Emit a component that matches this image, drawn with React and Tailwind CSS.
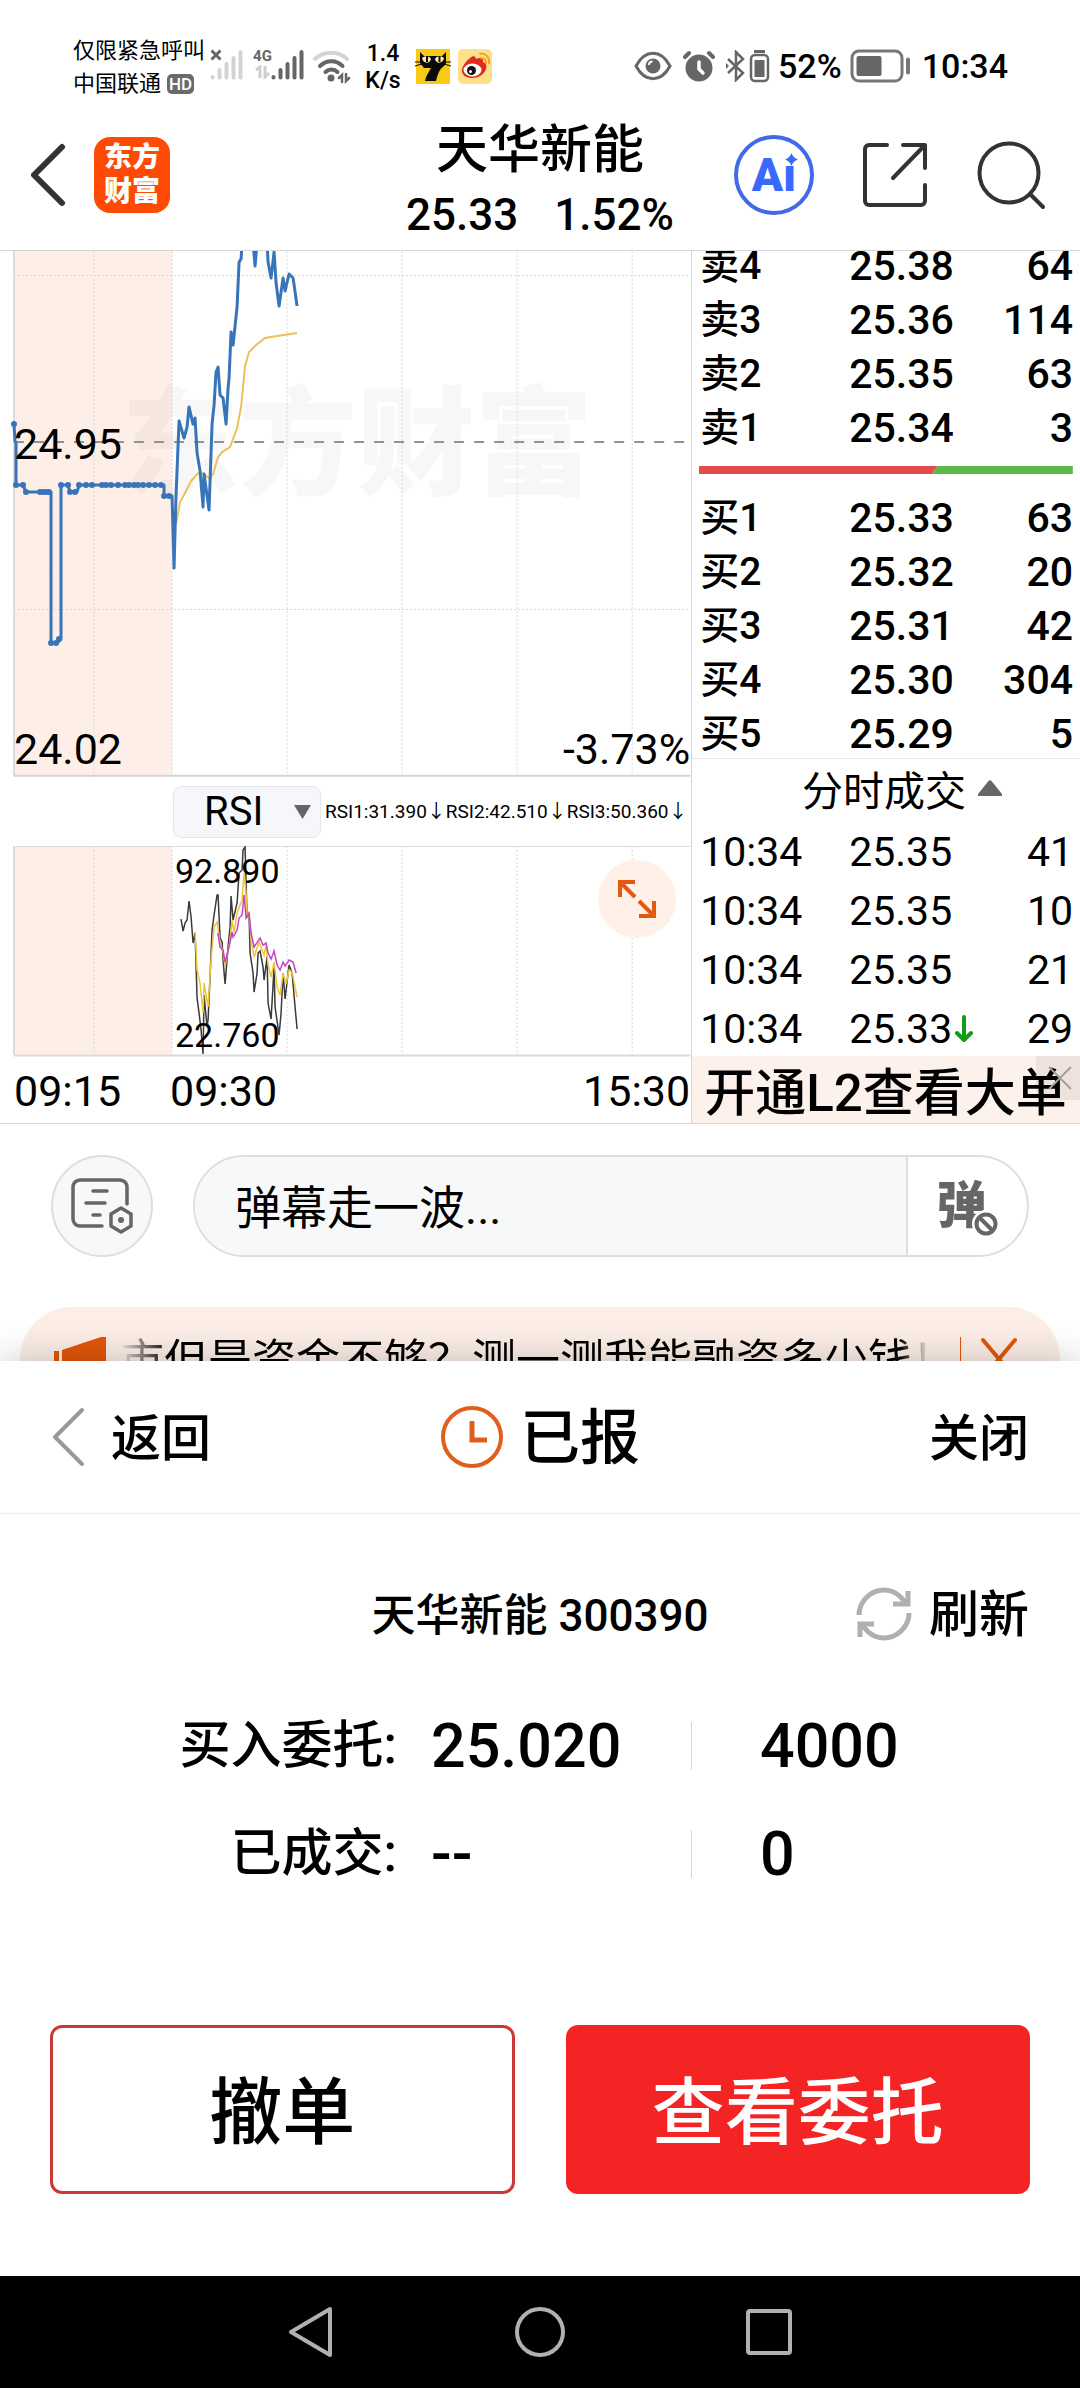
import React, { useState } from "react";

const SELL_ROWS = [
  ["卖3", "25.36", "114"],
  ["卖2", "25.35", "63"],
  ["卖1", "25.34", "3"],
];

const BUY_ROWS = [
  ["买1", "25.33", "63"],
  ["买2", "25.32", "20"],
  ["买3", "25.31", "42"],
  ["买4", "25.30", "304"],
  ["买5", "25.29", "5"],
];

const TRADES = [
  { time: "10:34", price: "25.35", volume: "41" },
  { time: "10:34", price: "25.35", volume: "10" },
  { time: "10:34", price: "25.35", volume: "21" },
  { time: "10:34", price: "25.33", volume: "29", down: true },
];

const GRID_X = [94, 172, 287, 402, 517, 632];

const PRICE_LINE =
  "14,173 15,190 16,192 16,234 23,234 26,241 51,241 51,392 57,392 61,388 61,234 68,234 70,241 77,241 79,234 164,234 164,245 172,245 174,317 176,244 179,170 184,187 187,176 189,156 193,173 195,167 197,202 200,220 203,256 204,223 209,259 212,173 214,154 216,121 218,116 220,144 223,147 226,173 228,137 229,127 231,81 233,94 237,56 239,11 241,8 242,-8 253,-8 255,15 257,-8 267,-8 268,11 271,27 274,1 276,32 279,55 283,27 285,40 289,23 293,27 297,55";

const AVG_LINE =
  "176,273 177,268 180,251 185,242 191,230 197,223 201,221 209,227 213,223 218,206 222,201 230,196 237,177 241,156 245,115 249,101 256,94 265,87 277,85 297,82";

// call auction ticks
const AUCTION_DOTS = [
  [14, 173], [16, 234], [23, 234], [26, 241], [40, 241], [43, 241], [46, 241], [49, 241],
  [51, 392], [56, 392], [59, 388], [61, 234], [68, 234], [70, 241], [75, 241], [79, 234],
  [86, 234], [92, 234], [102, 234], [106, 234], [111, 234], [118, 234], [125, 234], [129, 234],
  [134, 234], [138, 234], [143, 234], [149, 234], [155, 234], [161, 234], [164, 245], [169, 245],
];

const RSI1_LINE =
  "181,73 183,85 185,77 187,74 189,55 191,71 193,97 195,87 197,152 199,167 201,184 203,208 204,149 207,181 208,174 210,131 212,84 214,69 217,49 218,49 220,92 222,96 223,114 225,138 228,101 230,81 231,50 233,74 237,57 239,27 242,24 243,4 245,1 247,71 249,69 250,107 253,127 254,146 257,127 258,107 260,105 263,121 264,134 267,111 268,157 271,173 274,121 275,161 279,189 281,167 283,127 285,153 288,127 289,119 292,127 295,161 297,183";

const RSI2_LINE =
  "195,86 197,124 200,137 203,167 204,137 208,161 211,114 214,81 217,76 220,97 223,106 225,120 230,94 232,74 234,86 237,67 242,54 244,27 246,47 247,72 249,66 251,94 254,111 259,96 264,109 266,99 268,119 271,131 274,116 277,141 280,149 283,127 286,138 289,124 292,126 297,151";

const RSI3_LINE =
  "217,88 218,88 220,101 223,104 225,116 229,101 232,86 233,91 237,84 239,72 242,69 244,49 246,72 249,67 251,87 254,101 260,92 263,99 266,97 268,107 271,113 274,105 277,119 280,124 283,116 285,120 289,114 293,116 296,127";

const SignalBars = ({ color }) => (
  <svg width="33" height="32" viewBox="0 0 33 32" stroke={color} strokeWidth="4" strokeLinecap="round">
    <path d="M2.500 28v.5M9.500 21v7.500M16.500 15v13.500M23.500 9v19.500M30.500 3v25.500" />
  </svg>
);

const StatusBar = () => (
  <div className="flex h-[100px] items-start justify-between pl-[73px] pr-[72px] pt-8 text-black">
    <div className="flex items-start">
      <div className="pt-[2px] text-[22px] leading-[33px]">
        <div>仅限紧急呼叫</div>
        <div className="flex items-center gap-[6px]">
          中国联通
          <span className="rounded-[5px] bg-[#6a6a6a] px-[2px] text-[17px] font-medium leading-5 text-white">HD</span>
        </div>
      </div>
      <div className="relative ml-[5px] mt-[17px]">
        <SignalBars color="#d3d3d3" />
        <svg className="absolute left-0 top-0" width="12" height="12" viewBox="0 0 12 12" stroke="#666" strokeWidth="3">
          <path d="M1.500 1.500l9 9M10.500 1.500l-9 9" />
        </svg>
      </div>
      <div className="ml-[11px] mt-4 flex w-[17px] flex-col items-center">
        <span className="text-[15px] font-bold leading-[17px] text-[#666]">4G</span>
        <svg width="15" height="14" viewBox="0 0 15 14" stroke="#cfcfcf" strokeWidth="3" fill="none">
          <path d="M1 5l4-3v11M10 1v11l4-4" />
        </svg>
      </div>
      <div className="mt-[17px]">
        <SignalBars color="#666" />
      </div>
      <svg className="ml-[9px] mt-[18px]" width="39" height="34" viewBox="0 0 39 34" fill="none" strokeWidth="4" strokeLinecap="round">
        <path d="M2 9c9-8.500 24-8.500 32 0" stroke="#d3d3d3" />
        <path d="M7 16c6.500-6.500 16.500-6.500 22.500 0" stroke="#666" />
        <path d="M12.500 22c3.500-3.500 8.500-3.500 12 0" stroke="#666" />
        <circle cx="18" cy="28" r="3.500" fill="#666" />
        <path d="M26 28l3-3v7M33 24v7l3-3" stroke="#666" strokeWidth="2.500" />
      </svg>
      <div className="ml-3 mt-2 w-[38px] text-center text-[23px] font-medium leading-[27px]">
        <div>1.4</div>
        <div>K/s</div>
      </div>
      <svg className="ml-[13px] mt-4" width="36" height="36" viewBox="0 0 36 36">
        <rect x="1" y="1" width="34" height="35" fill="#f9c916" />
        <path d="M5 4l4 4h18l4-4v11c-1 3-4 4-6 7-2 3-3 7-4 11H10c1-5 3-8 6-13H9l-4-5z" fill="#0a0a0a" />
        <path d="M7 10c3-3 8-2 9 1-1 5-8 5-9-1zM20 11c1-3 6-4 9-1-1 6-8 6-9 1z" fill="#fff3a0" />
        <path d="M12 8v6M24.500 8v6" stroke="#0a0a0a" strokeWidth="2" />
        <path d="M0 14h7M0 18l7-2M36 14h-7M36 18l-7-2" stroke="#0a0a0a" />
      </svg>
      <svg className="ml-[6px] mt-4" width="36" height="36" viewBox="0 0 36 36">
        <rect x="1" y="1" width="34" height="35" rx="5" fill="#ffe08a" />
        <path d="M13 10c3-3 6-2 6 1 4-2 8-1 7 3 3 1 4 4 3 7-2 6-8 9-14 9C8 30 4 26 5 21c1-4 4-8 8-11z" fill="#e02b1d" />
        <ellipse cx="15.500" cy="22" rx="9" ry="6.500" fill="#fff" />
        <circle cx="14.500" cy="22.500" r="4.500" fill="#111" />
        <circle cx="13.500" cy="23.500" r="1.500" fill="#fff" />
        <path d="M24 10c3 0 5 2 5 5M23 5.500c6-.5 10 4 9 10" stroke="#f5a02a" strokeWidth="2" fill="none" strokeLinecap="round" />
      </svg>
    </div>

    <div className="mt-[14px] flex h-10 items-center text-[34px] font-medium leading-10">
      <svg width="38" height="30" viewBox="0 0 38 30" fill="none" stroke="#666" strokeWidth="3">
        <path d="M2 15C11-2 27-2 36 15 27 32 11 32 2 15z" />
        <circle cx="19" cy="15" r="7.500" fill="#666" stroke="none" />
        <path d="M15 14c0-2 1.500-3.500 3.500-3.500" stroke="#fff" strokeWidth="2" />
      </svg>
      <svg className="ml-[11px]" width="32" height="32" viewBox="0 0 32 32" fill="none">
        <circle cx="16" cy="18" r="13.500" fill="#666" />
        <path d="M16 12v7l4 4" stroke="#fff" strokeWidth="3.500" strokeLinecap="round" />
        <path d="M2 7l4-4M30 7l-4-4" stroke="#666" strokeWidth="4" strokeLinecap="round" />
      </svg>
      <svg className="ml-[11px]" width="20" height="32" viewBox="0 0 20 32" fill="none" stroke="#666" strokeWidth="2.500">
        <path d="M2 9l15 14-7 7V2l7 7L2 23" />
        <path d="M0 13l3 3-3 3z" fill="#666" stroke="none" />
      </svg>
      <svg className="ml-[3px]" width="21" height="34" viewBox="0 0 21 34" fill="none">
        <path d="M5 2.500h11" stroke="#666" strokeWidth="3" />
        <rect x="2" y="6" width="17" height="26" rx="4" stroke="#666" strokeWidth="2.500" />
        <rect x="5.500" y="11" width="10" height="17" fill="#666" />
      </svg>
      <span className="ml-2">52%</span>
      <svg className="ml-2" width="62" height="34" viewBox="0 0 62 34" fill="none">
        <rect x="2" y="2" width="50" height="30" rx="7" stroke="#777" strokeWidth="3" />
        <rect x="6.500" y="7" width="25" height="20" rx="2" fill="#666" />
        <path d="M58 10.500v13" stroke="#777" strokeWidth="4" strokeLinecap="round" />
      </svg>
      <span className="ml-[10px]">10:34</span>
    </div>
  </div>
);

const Header = () => (
  <header className="grid h-[151px] grid-cols-[1fr_auto_1fr] items-center border-b border-[#d6d6d6]">
    <div className="flex items-center gap-7 pl-7">
      <button aria-label="后退">
        <svg width="38" height="64" viewBox="0 0 38 64" fill="none" stroke="#333" strokeWidth="6" strokeLinecap="round" strokeLinejoin="round">
          <path d="M34 4L6 32l28 28" />
        </svg>
      </button>
      <button className="flex h-[76px] w-[76px] flex-col items-center justify-center rounded-2xl bg-[#ff4a05] text-[28px] font-black leading-[34px] text-white">
        <span>东方</span>
        <span>财富</span>
      </button>
    </div>
    <div className="pt-4 text-center font-medium text-black">
      <h1 className="text-[52px] leading-[64px]">天华新能</h1>
      <div className="flex justify-center gap-9 text-[44px] leading-[64px]">
        <span>25.33</span>
        <span>1.52%</span>
      </div>
    </div>
    <div className="flex items-center justify-end pr-[34px]">
      <button aria-label="Ai" className="relative flex h-20 w-20 items-center justify-center rounded-full border-4 border-[#4169e8] text-[46px] font-black leading-none text-[#3a69ff]">
        <span>Aı</span>
        <svg className="absolute right-3 top-[14px]" width="13" height="13" viewBox="0 0 12 12" fill="#3a69ff">
          <path d="M6 0c1 3 3 5 6 6-3 1-5 3-6 6-1-3-3-5-6-6 3-1 5-3 6-6z" />
        </svg>
      </button>
      <button aria-label="分享" className="ml-[47px]">
        <svg width="68" height="68" viewBox="0 0 68 68" fill="none" stroke="#333" strokeWidth="4" strokeLinecap="round" strokeLinejoin="round">
          <path d="M26 4H8a4 4 0 0 0-4 4v52a4 4 0 0 0 4 4h52a4 4 0 0 0 4-4V44M42 4h22v23M64 4L32 37" />
        </svg>
      </button>
      <button aria-label="搜索" className="ml-[47px]">
        <svg width="70" height="70" viewBox="0 0 70 70" fill="none" stroke="#333" strokeWidth="4" strokeLinecap="round">
          <circle cx="33" cy="33" r="29.500" />
          <path d="M54 54l13 13" />
        </svg>
      </button>
    </div>
  </header>
);

const GridColumns = ({ height }) =>
  GRID_X.map((x) => (
    <line key={x} x1={x} x2={x} y1="0" y2={height} stroke="#d9d9d9" strokeWidth="1" strokeDasharray="2 2" />
  ));

const PriceChart = () => (
  <div className="relative text-[43px] leading-[52px] text-black">
    <svg className="block h-auto w-full" viewBox="0 0 691 526" fill="none">
      <rect x="14" y="0" width="158" height="525" fill="#fdeee8" />
      <text x="121" y="235" fontSize="118" fontWeight="900" fill="#000" fillOpacity="0.03">东方财富</text>
      <GridColumns height={525} />
      <path d="M14 24.500h676M14 358.500h676" stroke="#d9d9d9" strokeDasharray="2 2" />
      <path d="M14 0v525" stroke="#dcdcdc" strokeWidth="2" />
      <path d="M14 524.500h676" stroke="#d4d4d4" strokeWidth="2" />
      <path d="M14 191h670" stroke="#929292" strokeWidth="2" strokeDasharray="10 10" />
      <polyline points={AVG_LINE} stroke="#ecc05c" strokeWidth="2" />
      <polyline points={PRICE_LINE} stroke="#3874b8" strokeWidth="3" strokeLinejoin="round" />
      {AUCTION_DOTS.map(([x, y]) => (
        <circle key={`${x}-${y}`} cx={x} cy={y} r="3" fill="#3874b8" />
      ))}
    </svg>
    <span className="absolute left-[14px] top-[167px]">24.95</span>
    <span className="absolute bottom-[2px] left-[14px]">24.02</span>
    <span className="absolute bottom-[2px] right-[1px]">-3.73%</span>
  </div>
);

const RsiToolbar = () => {
  const [indicator, setIndicator] = useState("RSI");

  return (
    <div className="flex h-[69px] items-center pl-[173px] text-black">
      <div className="relative">
        <select
          aria-label="指标"
          value={indicator}
          onChange={(e) => setIndicator(e.target.value)}
          className="h-[52px] w-[148px] appearance-none rounded-lg border border-[#e4e6e9] bg-[#f6f7fa] pl-[30px] text-[40px] leading-[48px]"
        >
          <option>RSI</option>
          <option>MACD</option>
          <option>KDJ</option>
        </select>
        <svg className="pointer-events-none absolute right-[10px] top-[19px]" width="17" height="14" viewBox="0 0 17 14" fill="#666">
          <path d="M0 0h17L8.500 14z" />
        </svg>
      </div>
      <div className="ml-1 flex flex-1 justify-between pr-1 text-[19px] leading-8">
        <span>RSI1:31.390↓</span>
        <span>RSI2:42.510↓</span>
        <span>RSI3:50.360↓</span>
      </div>
    </div>
  );
};

const RsiChart = () => (
  <div className="relative text-[34px] leading-10 text-black">
    <svg className="block h-auto w-full" viewBox="0 0 691 211" fill="none">
      <rect x="14" y="0" width="158" height="209" fill="#fdeee8" />
      <GridColumns height={209} />
      <path d="M14 .5h676" stroke="#dcdcdc" />
      <path d="M14 0v209M14 209.500h676" stroke="#dcdcdc" strokeWidth="2" />
      <polyline points={RSI1_LINE} stroke="#3a3a3a" strokeWidth="1.500" />
      <polyline points={RSI2_LINE} stroke="#edc63b" strokeWidth="1.500" />
      <polyline points={RSI3_LINE} stroke="#c545c9" strokeWidth="1.500" />
    </svg>
    <span className="absolute left-[175px] top-[5px]">92.890</span>
    <span className="absolute bottom-[2px] left-[175px]">22.760</span>
    <button aria-label="放大" className="absolute right-[15px] top-[14px] flex h-[78px] w-[78px] items-center justify-center rounded-full bg-[#fff0e8]">
      <svg width="40" height="40" viewBox="0 0 40 40" fill="none" stroke="#e05a14" strokeWidth="4">
        <path d="M3 18V3h15M3 3l15 15M37 22v15H22M37 37L22 22" />
      </svg>
    </button>
  </div>
);

const QuoteRow = ({ label, price, volume }) => (
  <div className="grid h-[54px] shrink-0 grid-cols-[149px_1fr_auto] items-center pl-2 pr-[7px] pt-[6px] text-[41px] font-medium leading-[48px]">
    <span className="text-[39px]">{label}</span>
    <span>{price}</span>
    <span>{volume}</span>
  </div>
);

const OrderBook = () => (
  <div className="text-black">
    <div className="flex h-[39px] flex-col justify-end overflow-hidden">
      <QuoteRow label="卖4" price="25.38" volume="64" />
    </div>
    {SELL_ROWS.map(([label, price, volume]) => (
      <QuoteRow key={label} label={label} price={price} volume={volume} />
    ))}
    <svg className="my-[14px] block h-2 w-full px-[7px]" viewBox="0 0 374 8" preserveAspectRatio="none">
      <path d="M0 0h239l-6 8H0z" fill="#e54b4b" />
      <path d="M239 0h135v8H233z" fill="#5cb847" />
    </svg>
    {BUY_ROWS.map(([label, price, volume]) => (
      <QuoteRow key={label} label={label} price={price} volume={volume} />
    ))}

    <button className="flex h-[62px] w-full items-center justify-center gap-3 border-t border-[#e6e6e6] pl-8 pt-1 text-[41px] leading-[50px]">
      分时成交
      <svg className="mb-2" width="24" height="16" viewBox="0 0 24 16" fill="#666">
        <path d="M10.500 1a2 2 0 0 1 3 0L24 14v2H0v-2z" />
      </svg>
    </button>
    {TRADES.map((trade, i) => (
      <div key={i} className="grid h-[59px] grid-cols-[149px_1fr_auto] items-center pl-2 pr-[7px] pt-1 text-[41px] leading-[50px]">
        <span>{trade.time}</span>
        <span className="flex items-center gap-[2px]">
          {trade.price}
          {trade.down && (
            <svg width="20" height="28" viewBox="0 0 20 28" fill="none" stroke="#129c17" strokeWidth="4" strokeLinecap="round" strokeLinejoin="round">
              <path d="M10 2v22M3 18l7 7 7-7" />
            </svg>
          )}
        </span>
        <span>{trade.volume}</span>
      </div>
    ))}

    <div className="relative h-[67px] bg-[#fdf1eb]">
      <a href="#l2" className="block pl-3 pt-[2px] text-[51px] font-medium leading-[71px] whitespace-nowrap">
        开通L2查看大单
      </a>
      <button aria-label="关闭广告" className="absolute right-0 top-0 flex h-11 w-11 items-center justify-center bg-black/6">
        <svg className="ml-1" width="24" height="24" viewBox="0 0 24 24" stroke="#a5a09e" strokeWidth="2">
          <path d="M1 1l22 22M23 1L1 23" />
        </svg>
      </button>
    </div>
  </div>
);

const DanmuBar = () => (
  <div className="flex items-center gap-10 pl-[51px] pr-[51px] pt-[31px]">
    <button aria-label="弹幕设置" className="flex h-[102px] w-[102px] shrink-0 items-center justify-center rounded-full border-2 border-[#dcdee2] bg-[#f7f8fa]">
      <svg width="64" height="58" viewBox="0 0 64 58" fill="none" stroke="#666" strokeWidth="3.500" strokeLinecap="round">
        <path d="M32 49H10a7 7 0 0 1-7-7V10a7 7 0 0 1 7-7h40a7 7 0 0 1 7 7v17" />
        <path d="M23 14h14M16 26h19M23 38h7" />
        <path d="M51 31l10 6v12l-10 6-10-6V37z" fill="#f7f8fa" strokeLinejoin="round" />
        <circle cx="51" cy="43" r="3" fill="#666" stroke="none" />
      </svg>
    </button>
    <div className="flex h-[102px] flex-1 overflow-hidden rounded-full border-2 border-[#dcdee2]">
      <input
        type="text"
        aria-label="弹幕"
        placeholder="弹幕走一波..."
        className="min-w-0 flex-1 border-r-2 border-[#dcdee2] bg-[#f7f8fa] pl-10 pt-1 text-[46px] text-black outline-none placeholder:text-black placeholder:opacity-100"
      />
      <button className="relative w-[119px] pr-3 text-[50px] font-black leading-[56px] text-[#666]">
        弹
        <svg className="absolute bottom-[17px] right-[27px]" width="28" height="28" viewBox="0 0 28 28" fill="#fff" stroke="#666" strokeWidth="4">
          <circle cx="14" cy="14" r="13" stroke="#fff" strokeWidth="2" />
          <circle cx="14" cy="14" r="9.500" />
          <path d="M8 8l12 12" />
        </svg>
      </button>
    </div>
  </div>
);

const PromoBanner = () => (
  <div className="mt-[50px] h-[54px] overflow-hidden px-5">
    <div className="flex h-[104px] items-center rounded-full bg-[#fceee6] pl-[34px] pr-[42px]">
      <svg className="shrink-0" width="52" height="46" viewBox="0 0 52 46" fill="#e2560a">
        <path d="M0 15h5v18H0zM8 14L47 1h5v44h-5L8 34z" />
      </svg>
      <div className="ml-[14px] h-14 w-[808px] overflow-hidden whitespace-nowrap pt-1 text-[44px] leading-[52px] text-black mask-[linear-gradient(90deg,transparent,#000_50px,#000_780px,transparent)]">
        市但是资金不够？测一测我能融资多少钱！
      </div>
      <div className="ml-8 h-11 w-[1px] bg-[#e2560a]" />
      <button aria-label="关闭提示" className="ml-5">
        <svg width="36" height="44" viewBox="0 0 36 44" stroke="#e2560a" strokeWidth="4" strokeLinecap="round">
          <path d="M2 3l32 38M34 3L2 41" />
        </svg>
      </button>
    </div>
  </div>
);

const OrderLine = ({ label, price, amount }) => (
  <div className="grid h-[108px] grid-cols-[397fr_294fr_389fr] items-center">
    <span className="text-right text-[51px] leading-[60px]">{label}</span>
    <span className="pl-[34px] text-[61px] font-medium leading-[60px]">{price}</span>
    <div className="flex items-center">
      <div className="h-12 w-[1px] bg-[#d5d5d5]" />
      <span className="pl-[68px] text-[61px] font-medium leading-[60px]">{amount}</span>
    </div>
  </div>
);

const OrderSheet = () => (
  <section className="relative bg-white font-medium text-black shadow-[0_0_36px_rgba(0,0,0,0.22)]">
    <div className="grid h-[153px] grid-cols-[1fr_auto_1fr] items-center border-b border-[#ededed] px-[51px] text-[50px]">
      <button className="flex items-center gap-[26px]">
        <svg width="34" height="60" viewBox="0 0 34 60" fill="none" stroke="#999" strokeWidth="4" strokeLinecap="round" strokeLinejoin="round">
          <path d="M31 3L4 30l27 27" />
        </svg>
        <span className="pt-1">返回</span>
      </button>
      <h2 className="flex items-center gap-4 text-[60px]">
        <svg width="64" height="64" viewBox="0 0 64 64" fill="none" stroke="#df5f1d">
          <circle cx="32" cy="32" r="29" strokeWidth="4" />
          <path d="M32 16v19h15" strokeWidth="5" />
        </svg>
        <span className="pt-1">已报</span>
      </h2>
      <button className="justify-self-end pt-1">关闭</button>
    </div>

    <div className="grid h-[135px] grid-cols-[1fr_auto_1fr] items-center px-[51px] pt-[60px]">
      <span className="col-start-2 pt-1 text-[44px]">天华新能 300390</span>
      <button className="flex items-center gap-4 justify-self-end text-[50px]">
        <svg width="58" height="56" viewBox="0 0 58 56" fill="none" stroke="#b0b0b0" strokeWidth="5">
          <path d="M4 29C4 6 36-8 51 18M54 27c0 23-32 37-47 11" />
          <path d="M38 18h15V5M19 38H5v13" />
        </svg>
        <span className="pt-1">刷新</span>
      </button>
    </div>

    <div className="mt-[43px]">
      <OrderLine label="买入委托:" price="25.020" amount="4000" />
      <OrderLine label="已成交:" price="--" amount="0" />
    </div>

    <div className="mt-[117px] grid grid-cols-2 gap-[51px] px-[50px] pb-[82px] text-[73px]">
      <button className="h-[169px] rounded-xl border-3 border-[#ca3838] pt-2">撤单</button>
      <button className="h-[169px] rounded-xl bg-[#f42424] pt-2 text-white">查看委托</button>
    </div>
  </section>
);

const NavBar = () => (
  <nav className="flex h-28 items-center justify-center gap-[178px] bg-black">
    <button aria-label="返回键">
      <svg width="50" height="54" viewBox="0 0 50 54" fill="none" stroke="#b1b1b1" strokeWidth="4" strokeLinejoin="round">
        <path d="M44 4v46L5 27z" />
      </svg>
    </button>
    <button aria-label="主屏幕">
      <svg width="52" height="52" viewBox="0 0 52 52" fill="none" stroke="#b1b1b1" strokeWidth="4">
        <circle cx="26" cy="26" r="23" />
      </svg>
    </button>
    <button aria-label="最近任务">
      <svg width="50" height="50" viewBox="0 0 50 50" fill="none" stroke="#b1b1b1" strokeWidth="4">
        <rect x="4" y="4" width="42" height="42" rx="2" />
      </svg>
    </button>
  </nav>
);

const App = () => {
  return (
    <div lang="zh-CN" className="bg-white font-['Roboto','Noto_Sans_CJK_SC',sans-serif]">
      <StatusBar />
      <Header />
      <main className="grid grid-cols-[16fr_9fr] border-b border-[#d9d9d9]">
        <div className="min-w-0">
          <PriceChart />
          <RsiToolbar />
          <RsiChart />
          <div className="flex pl-[14px] pr-[1px] pt-2 text-[43px] leading-[52px] text-black">
            <span className="w-[156px]">09:15</span>
            <span>09:30</span>
            <span className="ml-auto">15:30</span>
          </div>
        </div>
        <div className="min-w-0 border-l border-[#d6d6d6]">
          <OrderBook />
        </div>
      </main>
      <DanmuBar />
      <PromoBanner />
      <OrderSheet />
      <NavBar />
    </div>
  );
};

export default App;
